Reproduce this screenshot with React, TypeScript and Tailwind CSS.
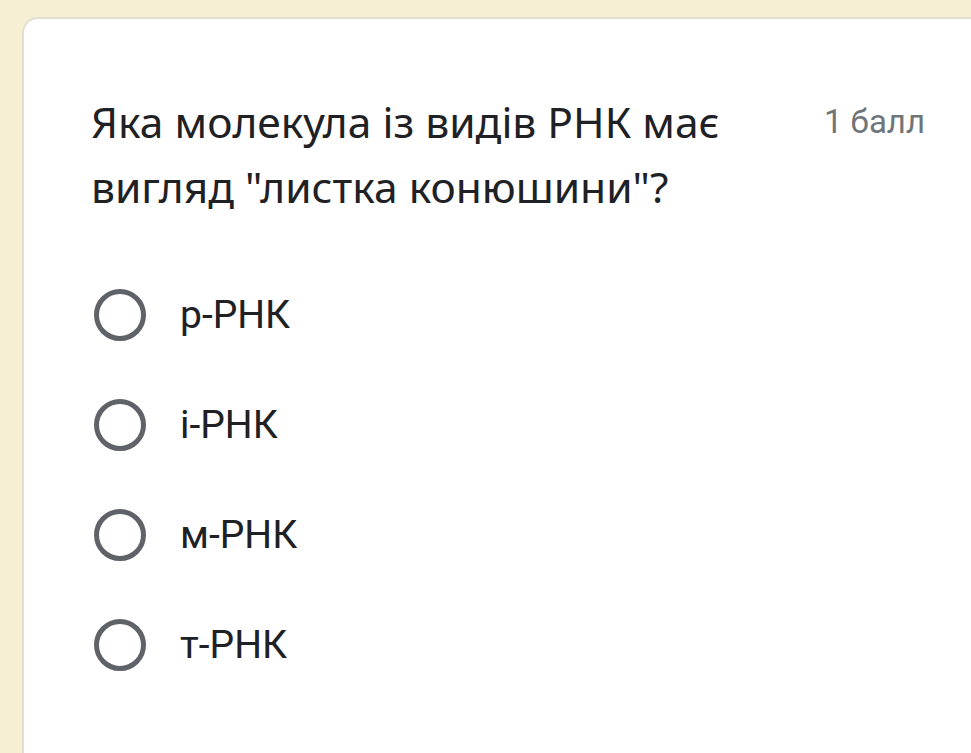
import React from "react";

const options = ["р-РНК", "і-РНК", "м-РНК", "т-РНК"];

export default function App() {
  return (
    <div className="min-h-screen bg-[#f7efd3] pt-[17px] pl-[22px] overflow-hidden">
      <div className="min-h-[736px] bg-white rounded-tl-[16px] border-l-2 border-t-2 border-[#e2ded2] pl-[67px] pr-[46px] pt-[70px]">
        {/* Question header */}
        <div className="flex items-start justify-between">
          <p className="text-[42.5px] leading-[65px] text-[#202124] font-['Noto_Sans','Roboto',sans-serif]">
            Яка молекула із видів РНК має
            <br />
            вигляд "листка конюшини"?
          </p>
          <span className="text-[33px] leading-[65px] text-[#70757a] font-['Roboto',sans-serif] whitespace-nowrap">
            1 балл
          </span>
        </div>

        {/* Options */}
        <div className="mt-[41px]">
          {options.map((opt) => (
            <label key={opt} className="flex items-center h-[110px] cursor-pointer">
              <span className="w-[52px] h-[52px] rounded-full border-[5px] border-[#5f6368] shrink-0 ml-[3px]" />
              <span className="ml-[34px] text-[39px] text-[#202124] font-['Roboto',sans-serif]">{opt}</span>
            </label>
          ))}
        </div>
      </div>
    </div>
  );
}
